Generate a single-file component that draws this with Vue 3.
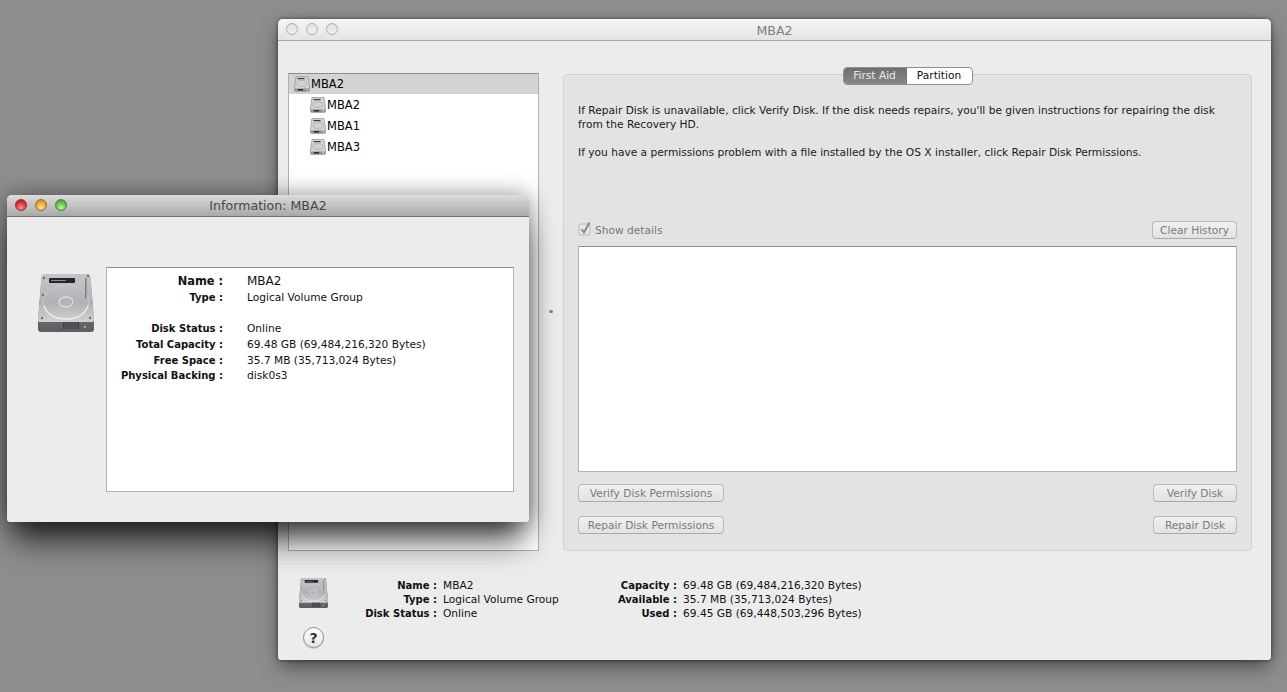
<script setup>
const volumes = ["MBA2", "MBA1", "MBA3"];

const infoRows = [
  { label: "Name", value: "MBA2", big: true },
  { label: "Type", value: "Logical Volume Group", gapAfter: true },
  { label: "Disk Status", value: "Online" },
  { label: "Total Capacity", value: "69.48 GB (69,484,216,320 Bytes)" },
  { label: "Free Space", value: "35.7 MB (35,713,024 Bytes)" },
  { label: "Physical Backing", value: "disk0s3" }
];

const summaryLeft = [
  { label: "Name", value: "MBA2" },
  { label: "Type", value: "Logical Volume Group" },
  { label: "Disk Status", value: "Online" }
];

const summaryRight = [
  { label: "Capacity", value: "69.48 GB (69,484,216,320 Bytes)" },
  { label: "Available", value: "35.7 MB (35,713,024 Bytes)" },
  { label: "Used", value: "69.45 GB (69,448,503,296 Bytes)" }
];
</script>

<template>
  <div class="desktop">
    <svg class="sprite" width="0" height="0">
      <defs>
        <linearGradient id="diskTop" x1="0" y1="0" x2="0" y2="1">
          <stop offset="0" stop-color="#c6c6ca" />
          <stop offset="0.6" stop-color="#b2b2b6" />
          <stop offset="1" stop-color="#d2d2d4" />
        </linearGradient>
        <linearGradient id="diskFront" x1="0" y1="0" x2="0" y2="1">
          <stop offset="0" stop-color="#96969c" />
          <stop offset="1" stop-color="#5c5c62" />
        </linearGradient>
        <symbol id="disk" viewBox="0 0 56 60">
          <path d="M7 0H49Q52 0 52.500 3L56 47V55Q56 58 53 58H3Q0 58 0 55V47L3.500 3Q4 0 7 0Z" fill="url(#diskFront)" />
          <path d="M7 0H49Q52 0 52.500 3L56 46Q56 48 53 48H3Q0 48 0 46L3.500 3Q4 0 7 0Z" fill="url(#diskTop)" />
          <ellipse cx="28" cy="28" rx="23" ry="17" fill="none" stroke="#cdcdd0" stroke-width="0.800" />
          <path d="M6 32Q11 45 28 45Q45 45 50 32" fill="none" stroke="#f0f0f2" stroke-width="1.300" />
          <ellipse cx="28" cy="28" rx="7" ry="5" fill="#b4b4b8" stroke="#dedee0" stroke-width="1.300" />
          <rect x="11" y="4" width="26" height="5" rx="1" fill="#26262a" />
          <rect x="13" y="6" width="15" height="1" fill="#8c8c90" />
          <rect x="47" y="4" width="1.500" height="20" fill="#7d7d82" />
          <circle cx="6" cy="4" r="1.200" fill="#6e6e73" />
          <circle cx="50" cy="2" r="1.200" fill="#6e6e73" />
          <circle cx="5" cy="21" r="1.200" fill="#6e6e73" />
          <circle cx="4" cy="44" r="1.200" fill="#6e6e73" />
          <circle cx="52" cy="44" r="1.200" fill="#6e6e73" />
          <rect x="25" y="48" width="16" height="7" fill="#3c3c42" />
          <path d="M27 48V55M29 48V55M31 48V55M33 48V55M35 48V55M37 48V55M39 48V55" stroke="#77777d" stroke-width="0.700" />
          <rect x="46" y="52" width="1.600" height="1.600" fill="#e8d84a" />
        </symbol>
        <symbol id="diskSmall" viewBox="0 0 16 16">
          <path d="M2 .5H14L15.500 11V14.500Q15.500 15.500 14.500 15.500H1.500Q.5 15.500 .5 14.500V11Z" fill="#d2d2d4" stroke="#9a9a9e" stroke-width="0.800" />
          <rect x="3.500" y="2" width="7" height="1.200" fill="#3c3c40" />
          <ellipse cx="8" cy="7.500" rx="5" ry="3" fill="none" stroke="#a8a8ac" stroke-width="0.700" />
          <rect x="1" y="12.500" width="14" height="2.500" fill="#8d8d92" />
          <rect x="4" y="13" width="5" height="1.500" fill="#2b2b2e" />
          <rect x="12.500" y="13" width="1.600" height="1.400" fill="#ead94a" />
        </symbol>
      </defs>
    </svg>

    <!-- Disk Utility window, inactive -->
    <section class="window main-window">
      <header class="titlebar titlebar-idle">
        <div class="lights">
          <span class="light idle"></span>
          <span class="light idle"></span>
          <span class="light idle"></span>
        </div>
        <span class="title">MBA2</span>
      </header>

      <div class="main-body">
        <aside class="sidebar">
          <div class="disk-row selected">
            <svg class="row-icon"><use href="#diskSmall" /></svg>
            <span>MBA2</span>
          </div>
          <div v-for="v in volumes" :key="v" class="disk-row child">
            <svg class="row-icon"><use href="#diskSmall" /></svg>
            <span>{{ v }}</span>
          </div>
        </aside>

        <div class="splitter"><span class="split-dot"></span></div>

        <main class="panel">
          <div class="tabs">
            <span class="tab tab-on">First Aid</span>
            <span class="tab">Partition</span>
          </div>

          <p class="note">If Repair Disk is unavailable, click Verify Disk. If the disk needs repairs, you'll be given instructions for repairing the disk from the Recovery HD.</p>
          <p class="note note-second">If you have a permissions problem with a file installed by the OS X installer, click Repair Disk Permissions.</p>

          <div class="details-bar">
            <label class="details-check">
              <svg class="checkbox" width="14" height="15" viewBox="0 0 14 15">
                <rect x="1" y="3" width="11" height="11" rx="2" fill="#e8e8e8" stroke="#b5b5b5" />
                <path d="M3.500 8L6 11.500L11.500 1.500" fill="none" stroke="#8a8a8a" stroke-width="2" />
              </svg>
              Show details
            </label>
            <button class="btn btn-clear">Clear History</button>
          </div>

          <div class="log"></div>

          <div class="actions">
            <button class="btn btn-wide">Verify Disk Permissions</button>
            <button class="btn btn-narrow">Verify Disk</button>
          </div>
          <div class="actions">
            <button class="btn btn-wide">Repair Disk Permissions</button>
            <button class="btn btn-narrow">Repair Disk</button>
          </div>
        </main>
      </div>

      <footer class="summary">
        <div class="summary-icons">
          <svg class="summary-disk"><use href="#disk" /></svg>
          <span class="help">?</span>
        </div>
        <div class="kv kv-left">
          <template v-for="r in summaryLeft" :key="r.label">
            <span class="k">{{ r.label }} :</span>
            <span class="v">{{ r.value }}</span>
          </template>
        </div>
        <div class="kv kv-right">
          <template v-for="r in summaryRight" :key="r.label">
            <span class="k">{{ r.label }} :</span>
            <span class="v">{{ r.value }}</span>
          </template>
        </div>
      </footer>
    </section>

    <!-- Information window, frontmost -->
    <section class="window info-window">
      <header class="titlebar titlebar-active">
        <div class="lights">
          <span class="light red"></span>
          <span class="light amber"></span>
          <span class="light green"></span>
        </div>
        <span class="title title-dark">Information: MBA2</span>
      </header>
      <div class="info-body">
        <svg class="info-disk"><use href="#disk" /></svg>
        <div class="info-box">
          <div
            v-for="r in infoRows"
            :key="r.label"
            class="info-row"
            :class="{ big: r.big, spaced: r.gapAfter }"
          >
            <span class="info-k">{{ r.label }} :</span>
            <span class="info-v">{{ r.value }}</span>
          </div>
        </div>
      </div>
    </section>
  </div>
</template>

<style scoped>
.desktop {
  position: relative;
  width: 1287px;
  height: 692px;
  overflow: hidden;
  background: #8e8e8e;
  font-family: "DejaVu Sans", "Liberation Sans", sans-serif;
  font-size: 10.63px;
  color: #111;
}

.sprite {
  position: absolute;
}

.window {
  position: absolute;
  display: flex;
  flex-direction: column;
  background: #ececec;
  border-radius: 5px 5px 3px 3px;
  box-sizing: border-box;
}

.main-window {
  left: 278px;
  top: 19px;
  width: 993px;
  height: 641px;
  box-shadow: 0 8px 20px -2px rgba(0, 0, 0, 0.5), 0 0 4px rgba(0, 0, 0, 0.55);
}

.info-window {
  left: 7px;
  top: 195px;
  width: 522px;
  height: 327px;
  box-shadow: 0 24px 30px -6px rgba(0, 0, 0, 0.72), 0 0 22px rgba(0, 0, 0, 0.42);
}

.titlebar {
  position: relative;
  flex: none;
  display: flex;
  align-items: center;
  justify-content: center;
  height: 22px;
  box-sizing: border-box;
  border-bottom: 1px solid #a9a9a9;
  border-radius: 5px 5px 0 0;
}

.titlebar-idle {
  background: linear-gradient(#f5f5f5, #e3e3e3);
}

.titlebar-idle .title {
  margin-top: 1px;
}

.titlebar-active {
  background: linear-gradient(#dcdcdc, #a9a9a9);
  border-bottom-color: #6f6f6f;
}

.title {
  font-size: 12.6px;
  color: #7d7d7d;
}

.title-dark {
  color: #4b4444;
}

.lights {
  position: absolute;
  left: 8px;
  top: 4px;
  display: flex;
  gap: 8px;
}

.light {
  width: 12px;
  height: 12px;
  border-radius: 50%;
  box-sizing: border-box;
}

.light.idle {
  background: linear-gradient(#e2e2e2, #f0f0f0);
  border: 1px solid #adadad;
}

.light.red {
  background: radial-gradient(circle at 50% 75%, #ff8f8f, #e0262c 60%, #a81c20);
  border: 1px solid #8c3a3a;
}

.light.amber {
  background: radial-gradient(circle at 50% 75%, #ffe08a, #f0a21e 60%, #b87a18);
  border: 1px solid #92703a;
}

.light.green {
  background: radial-gradient(circle at 50% 75%, #bff0a0, #5cbc3a 60%, #3c8a2a);
  border: 1px solid #4f7f44;
}

/* main window */
.main-body {
  display: flex;
  height: 478px;
  margin: 32px 19px 0 10px;
}

.sidebar {
  flex: none;
  width: 251px;
  box-sizing: border-box;
  background: #fff;
  border: 1px solid #b0b0b0;
  border-top-color: #8d8d8d;
  font-size: 11.5px;
  color: #000;
}

.disk-row {
  display: flex;
  align-items: center;
  gap: 1px;
  height: 21px;
  padding-left: 5px;
}

.disk-row.selected {
  height: 20px;
  background: #d3d3d3;
}

.disk-row.child {
  padding-left: 21px;
}

.row-icon {
  width: 16px;
  height: 16px;
}

.splitter {
  flex: none;
  width: 24px;
  display: flex;
  align-items: center;
  justify-content: center;
}

.split-dot {
  width: 4px;
  height: 3px;
  margin-top: -2px;
  border-radius: 50%;
  background: #808080;
}

.panel {
  position: relative;
  flex: 1;
  margin-top: 1px;
  box-sizing: border-box;
  padding: 29px 14px 0;
  background: #e3e3e3;
  border: 1px solid #d1d1d1;
  border-radius: 4px;
}

.tabs {
  position: absolute;
  top: -8px;
  left: 50%;
  transform: translateX(-50%);
  display: flex;
  height: 18px;
  box-sizing: border-box;
  border: 1px solid #8f8f8f;
  border-radius: 4px;
  overflow: hidden;
  background: #fff;
}

.tab {
  display: flex;
  align-items: center;
  justify-content: center;
  width: 65px;
  padding-bottom: 2px;
  box-sizing: border-box;
  color: #111;
}

.tab-on {
  width: 63px;
  background: linear-gradient(#6e6e6e, #888);
  color: #e8e8e8;
  border-right: 1px solid #777;
}

.note {
  margin: 0;
  line-height: 14px;
  width: 650px;
  color: #1a1a1a;
}

.note-second {
  margin-top: 14px;
}

.details-bar {
  display: flex;
  align-items: center;
  justify-content: space-between;
  margin-top: 61px;
  height: 18px;
}

.details-check {
  display: flex;
  align-items: center;
  gap: 3px;
  color: #777;
}

.checkbox {
  margin-top: -3px;
}

.btn {
  height: 18px;
  box-sizing: border-box;
  padding: 0;
  border: 1px solid #b9b9b9;
  border-bottom-color: #a9a9a9;
  border-radius: 4px;
  background: linear-gradient(#f0f0f0, #e2e2e2);
  font: inherit;
  color: #7a7a7a;
}

.btn-clear {
  width: 85px;
}

.btn-wide {
  width: 146px;
}

.btn-narrow {
  width: 84px;
}

.log {
  height: 226px;
  margin-top: 7px;
  background: #fff;
  border: 1px solid #b3b3b3;
  border-top-color: #8f8f8f;
  box-sizing: border-box;
}

.actions {
  display: flex;
  justify-content: space-between;
  margin-top: 14px;
}

.log + .actions {
  margin-top: 12px;
}

/* summary strip */
.summary {
  display: flex;
  margin: 27px 0 0 21px;
}

.summary-icons {
  flex: none;
  width: 29px;
  display: flex;
  flex-direction: column;
  align-items: center;
}

.summary-disk {
  width: 29px;
  height: 31px;
}

.help {
  width: 21px;
  height: 21px;
  margin-top: 18px;
  border-radius: 50%;
  box-sizing: border-box;
  border: 1px solid #8d8d8d;
  background: linear-gradient(#ffffff, #e6e6e6);
  box-shadow: 0 1px 1px rgba(0, 0, 0, 0.15);
  display: flex;
  align-items: center;
  justify-content: center;
  font-size: 14px;
  font-weight: bold;
  color: #333;
}

.kv {
  display: grid;
  grid-auto-rows: 14px;
  column-gap: 6px;
  align-content: start;
  margin-top: 1px;
  line-height: 14px;
}

.kv-left {
  width: 253px;
  grid-template-columns: 108px auto;
  margin-left: 1px;
}

.kv-right {
  grid-template-columns: 95px auto;
}

.k {
  text-align: right;
  font-size: 10px;
  font-weight: bold;
  white-space: nowrap;
}

.v {
  white-space: nowrap;
}

/* information window */
.info-body {
  display: flex;
  align-items: flex-start;
  padding: 50px 15px 30px 31px;
  flex: 1;
}

.info-disk {
  flex: none;
  width: 56px;
  height: 60px;
  margin-top: 7px;
}

.info-box {
  flex: none;
  width: 408px;
  height: 225px;
  margin-left: 12px;
  padding-top: 5px;
  box-sizing: border-box;
  background: #fff;
  border: 1px solid #b2b2b2;
  border-top-color: #8f8f8f;
}

.info-row {
  display: grid;
  grid-template-columns: 116px auto;
  column-gap: 24px;
  height: 16px;
  line-height: 16px;
}

.info-row.big {
  height: 17px;
}

.info-row.spaced {
  margin-bottom: 15px;
}

.info-row:last-child {
  margin-top: -1px;
}

.info-k {
  text-align: right;
  font-size: 10px;
  font-weight: bold;
  white-space: nowrap;
}

.info-v {
  white-space: nowrap;
}

.info-row.big .info-k {
  font-size: 11.4px;
}

.info-row.big .info-v {
  font-size: 12px;
}
</style>

<style>
body {
  background: #8e8e8e;
}
</style>
